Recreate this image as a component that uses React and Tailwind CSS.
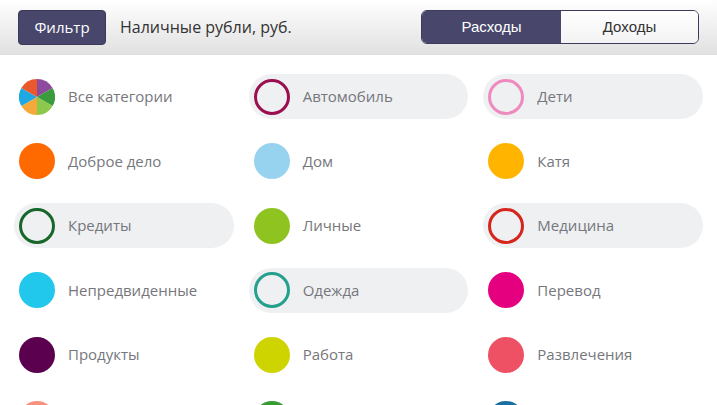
import React from "react";

const categories = [
  { name: "Все категории", pie: true },
  { name: "Автомобиль", color: "#9c0f4f", ring: true },
  { name: "Дети", color: "#ef8ac0", ring: true },
  { name: "Доброе дело", color: "#ff6a00" },
  { name: "Дом", color: "#97d3ef" },
  { name: "Катя", color: "#ffb500" },
  { name: "Кредиты", color: "#17672a", ring: true },
  { name: "Личные", color: "#8fc31f" },
  { name: "Медицина", color: "#d5251c", ring: true },
  { name: "Непредвиденные", color: "#22c8ec" },
  { name: "Одежда", color: "#24a08e", ring: true },
  { name: "Перевод", color: "#e4007f" },
  { name: "Продукты", color: "#5b004f" },
  { name: "Работа", color: "#cdd400" },
  { name: "Развлечения", color: "#ee5163" },
  { name: "Ремонт", color: "#f59380" },
  { name: "Спорт", color: "#3a9a36" },
  { name: "Связь", color: "#1b6ea0" },
];

function Pie() {
  const colors = ["#8e4a9c", "#3a9a3c", "#8cc84b", "#f4a93a", "#1ea8e4", "#e9592c"];
  const r = 18;
  const slices = colors.map((c, i) => {
    const a0 = ((i * 60 - 90) * Math.PI) / 180;
    const a1 = (((i + 1) * 60 - 90) * Math.PI) / 180;
    const x0 = r + r * Math.cos(a0);
    const y0 = r + r * Math.sin(a0);
    const x1 = r + r * Math.cos(a1);
    const y1 = r + r * Math.sin(a1);
    return <path key={i} d={`M${r} ${r} L${x0} ${y0} A${r} ${r} 0 0 1 ${x1} ${y1} Z`} fill={c} />;
  });
  return (
    <svg width="36" height="36" viewBox="0 0 36 36" className="shrink-0">
      {slices}
    </svg>
  );
}

function Dot({ cat }) {
  if (cat.pie) return <Pie />;
  if (cat.ring)
    return (
      <div
        className="w-9 h-9 rounded-full border-[3.5px] shrink-0"
        style={{ borderColor: cat.color }}
      />
    );
  return <div className="w-9 h-9 rounded-full shrink-0" style={{ backgroundColor: cat.color }} />;
}

export default function App() {
  return (
    <div className="w-[717px] h-[405px] overflow-hidden bg-white" style={{ fontFamily: '"Open Sans", sans-serif' }}>
      {/* Header */}
      <div className="h-[55px] flex items-center justify-between px-[18px] bg-gradient-to-b from-white to-[#e1e1e1] border-b border-[#dcdcdc]">
        <div className="flex items-center">
          <button className="w-[88px] h-[35px] rounded-[4px] bg-[#48476b] border border-[#3a3958] text-white text-[15px]">
            Фильтр
          </button>
          <span className="ml-[14px] text-[16px] text-[#333]">Наличные рубли, руб.</span>
        </div>
        <div
          className="flex w-[278px] h-[34px] rounded-[6px] border-[1.5px] border-[#3c3b5c] overflow-hidden text-[15px]"
          style={{ fontFamily: '"Liberation Sans", Arial, sans-serif' }}
        >
          <div className="w-[139px] flex items-center justify-center bg-[#48476b] text-white">Расходы</div>
          <div className="flex-1 flex items-center justify-center bg-gradient-to-b from-white to-[#f3f3f3] text-[#333]">
            Доходы
          </div>
        </div>
      </div>

      {/* Categories */}
      <div className="grid grid-cols-3 gap-x-[15px] gap-y-[19.5px] px-[14px] pt-[19px]">
        {categories.map((cat) => (
          <div
            key={cat.name}
            className={`h-[45px] flex items-center pl-[5px] rounded-full ${cat.ring ? "bg-[#eef0f2]" : ""}`}
          >
            <Dot cat={cat} />
            <span className="ml-[13px] text-[15px] leading-none text-[#76777c]">{cat.name}</span>
          </div>
        ))}
      </div>
    </div>
  );
}
